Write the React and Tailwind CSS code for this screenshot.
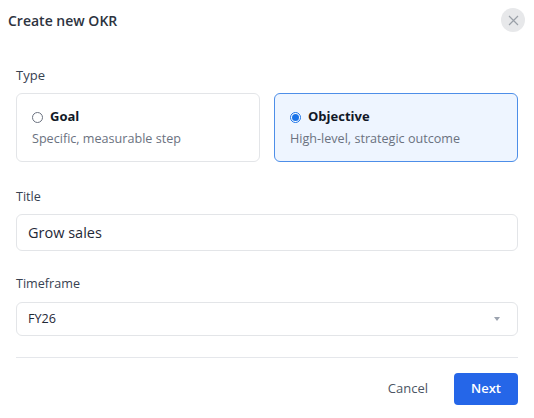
import React from "react";

function Radio({ checked }) {
  return checked ? (
    <span className="flex h-[11px] w-[11px] items-center justify-center rounded-full border border-[#1a73e8] bg-white">
      <span className="h-[7px] w-[7px] rounded-full bg-[#1a73e8]" />
    </span>
  ) : (
    <span className="h-[11px] w-[11px] rounded-full border border-[#6b7280] bg-white" />
  );
}

function TypeCard({ title, desc, selected }) {
  return (
    <div
      className={
        "h-[69px] rounded-[6px] border px-[15px] pt-[14px] " +
        (selected ? "border-[#4d8ee8] bg-[#eef5ff]" : "border-[#e3e5e8] bg-white")
      }
    >
      <div className="flex h-[18px] items-center gap-[7px]">
        <Radio checked={selected} />
        <span className="text-[13px] font-bold text-[#111827]">{title}</span>
      </div>
      <div className="mt-[4px] text-[12.6px] leading-[18px] text-[#6b7280]">{desc}</div>
    </div>
  );
}

export default function App() {
  return (
    <div
      className="relative h-[418px] w-[534px] overflow-hidden bg-white"
      style={{ fontFamily: '"Open Sans", "Noto Sans", sans-serif' }}
    >
      <div className="flex h-[40px] items-center justify-between pl-[8px] pr-[9px]">
        <h2 className="text-[14px] font-semibold text-[#2d3340]">Create new OKR</h2>
        <button className="flex h-[24px] w-[24px] items-center justify-center rounded-full bg-[#e7e8ea]">
          <svg width="11" height="11" viewBox="0 0 11 11" fill="none" stroke="#9aa0a8" strokeWidth="1.2">
            <path d="M1 1L10 10M10 1L1 10" />
          </svg>
        </button>
      </div>

      <div className="px-[16px]">
        <div className="mt-[26px] text-[13px] leading-[18px] text-[#374151]">Type</div>
        <div className="mt-[9px] grid grid-cols-2 gap-[14px]">
          <TypeCard title="Goal" desc="Specific, measurable step" />
          <TypeCard title="Objective" desc="High-level, strategic outcome" selected />
        </div>

        <div className="mt-[26px] text-[12.6px] leading-[18px] text-[#374151]">Title</div>
        <div className="mt-[8px] flex h-[37px] items-center rounded-[6px] border border-[#e3e5e8] px-[11px] text-[14.5px] text-[#1f2937]">
          Grow sales
        </div>

        <div className="mt-[24px] text-[12.6px] leading-[18px] text-[#374151]">Timeframe</div>
        <div className="mt-[9px] flex h-[34px] items-center justify-between rounded-[6px] border border-[#e3e5e8] pl-[11px] pr-[17px] text-[12.6px] text-[#1f2937]">
          <span>FY26</span>
          <svg width="6" height="4" viewBox="0 0 6 4">
            <path d="M0 0H6L3 4Z" fill="#9ca3af" />
          </svg>
        </div>

        <div className="mt-[21px] h-px bg-[#e5e7eb]" />

        <div className="mt-[15px] flex items-center justify-end">
          <button className="mr-[26px] text-[13px] text-[#4b5563]">Cancel</button>
          <button className="h-[32px] w-[64px] rounded-[4px] bg-[#2566e8] text-[13px] font-semibold text-white">
            Next
          </button>
        </div>
      </div>
    </div>
  );
}
